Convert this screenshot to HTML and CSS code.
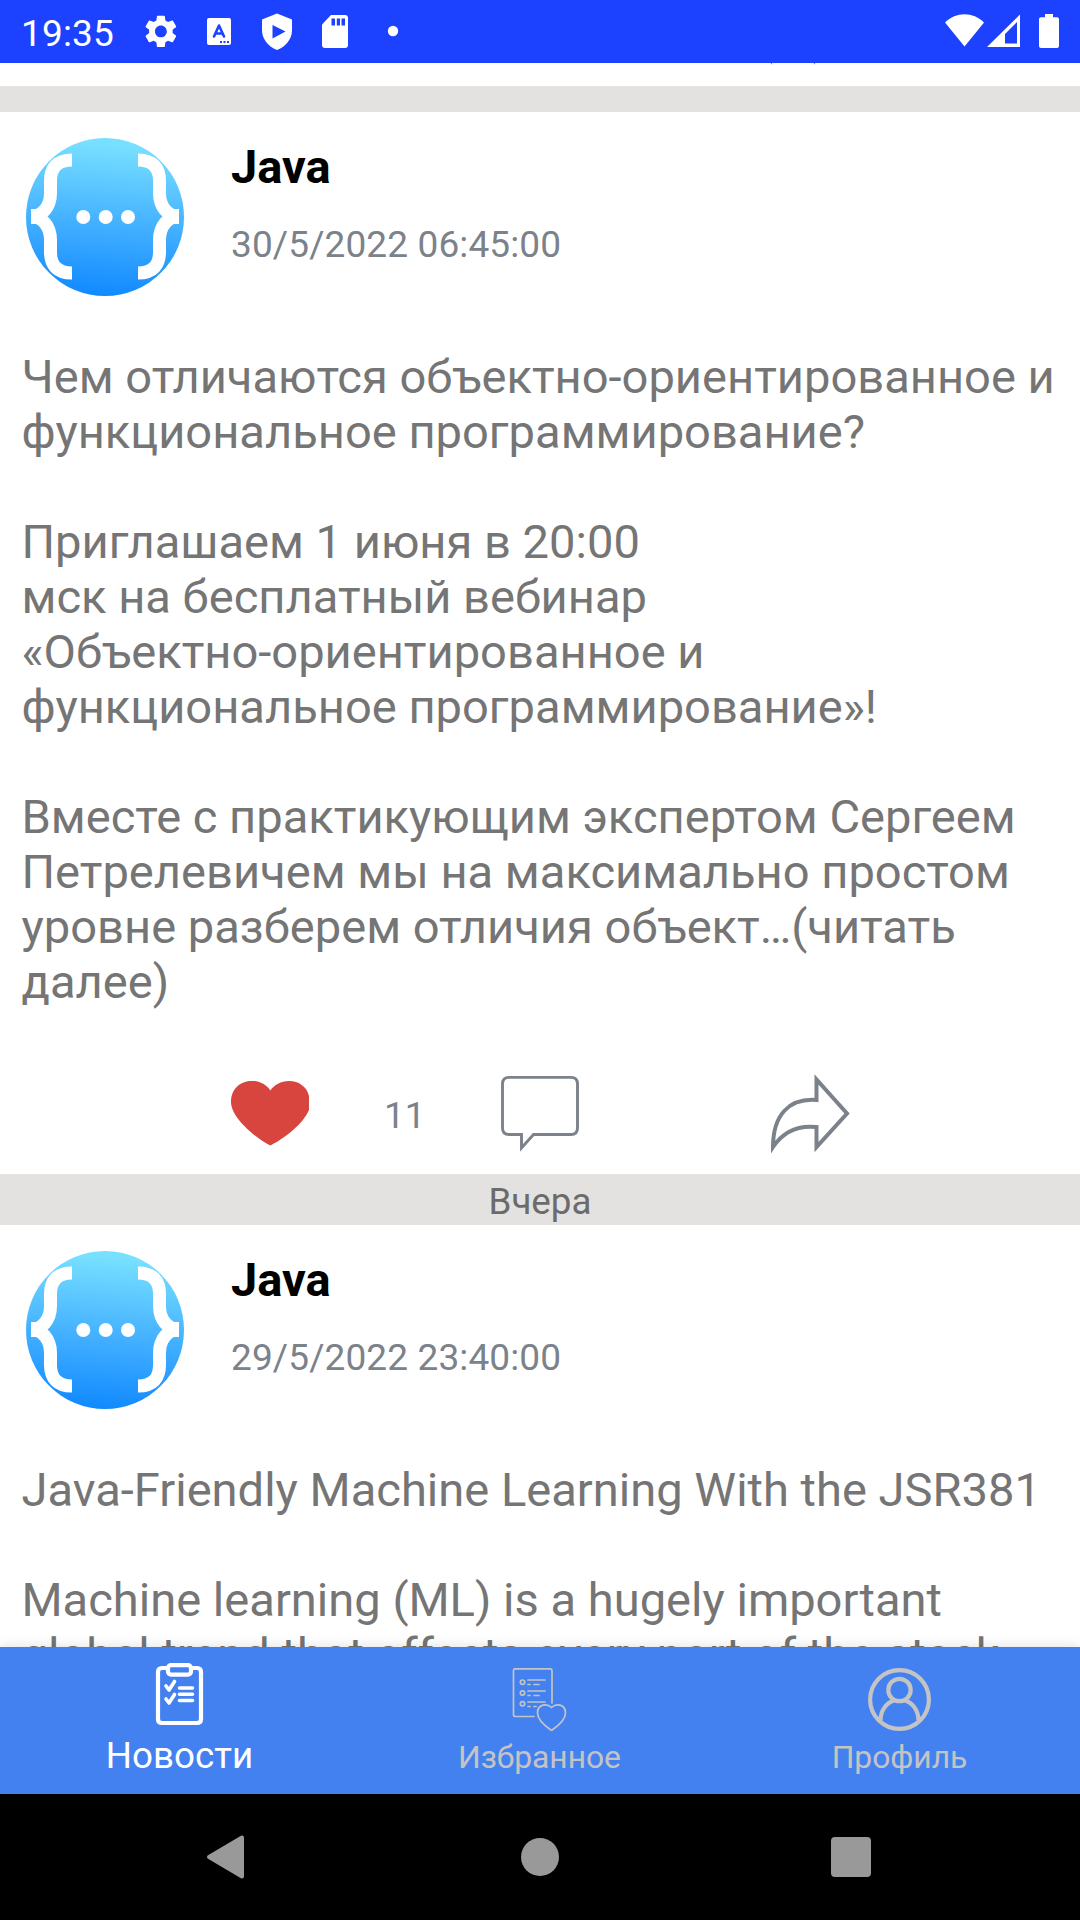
FILE: index.html
```html
<!DOCTYPE html>
<html lang="ru">
<head>
<meta charset="utf-8">
<title>Новости</title>
<link rel="stylesheet" href="styles.css">
</head>
<body>
<svg class="defs" width="0" height="0">
  <defs>
    <linearGradient id="sky" x1="0.08" y1="0" x2="0" y2="1">
      <stop offset="0" stop-color="#78e0ff"/>
      <stop offset="0.5" stop-color="#44b1ff"/>
      <stop offset="1" stop-color="#0d86ff"/>
    </linearGradient>
    <clipPath id="disc"><circle cx="79" cy="79" r="79"/></clipPath>
    <symbol id="avatar" viewBox="0 0 158 158">
      <g clip-path="url(#disc)">
        <rect width="158" height="158" fill="url(#sky)"/>
        <g fill="none" stroke="#fff" stroke-width="13">
          <path d="M46 22C31 22 24.500 30 24.500 43V55C24.500 69 16 78.500 5 78.500C16 78.500 24.500 88 24.500 102V114C24.500 127 31 135 46 135"/>
          <path d="M112 22C127 22 133.500 30 133.500 43V55C133.500 69 142 78.500 153 78.500C142 78.500 133.500 88 133.500 102V114C133.500 127 127 135 112 135"/>
        </g>
        <path d="M5 71H10L16 78.500L10 86H5ZM153 71H148L142 78.500L148 86H153Z" fill="#fff"/>
        <g fill="#fff"><circle cx="57.300" cy="79" r="7"/><circle cx="79.700" cy="79" r="7"/><circle cx="102" cy="79" r="7"/></g>
      </g>
    </symbol>
  </defs>
</svg>
<div class="screen">
  <header class="status">
    <span class="clock">19:35</span>
    <svg class="status-left" width="270" height="63" viewBox="130 0 270 63" fill="#fff">
      <path transform="translate(141.200 11.700) scale(1.640)" d="M19.140 12.940c.040-.3.060-.61.060-.94 0-.32-.02-.64-.07-.94l2.030-1.580c.18-.14.23-.41.120-.61l-1.920-3.320c-.12-.22-.37-.29-.59-.22l-2.390.96c-.5-.38-1.030-.7-1.620-.94l-.36-2.540c-.04-.24-.24-.41-.48-.41h-3.840c-.24 0-.43.17-.47.41l-.36 2.540c-.59.24-1.130.57-1.620.94l-2.390-.96c-.22-.08-.47 0-.59.22L2.740 8.870c-.12.21-.08.47.12.610l2.030 1.580c-.05.3-.09.63-.09.940s.02.640.07.940l-2.030 1.580c-.18.14-.23.41-.12.610l1.920 3.320c.12.22.37.29.59.22l2.390-.96c.5.38 1.030.7 1.620.94l.36 2.540c.05.24.24.41.48.410h3.840c.24 0 .44-.17.470-.41l.36-2.540c.59-.24 1.130-.56 1.620-.94l2.390.96c.22.080.47 0 .59-.22l1.920-3.320c.12-.22.070-.47-.12-.610l-2.010-1.580zM12 15.600c-1.980 0-3.600-1.620-3.600-3.600s1.620-3.600 3.600-3.600 3.600 1.620 3.600 3.600-1.620 3.600-3.600 3.600z"/>
      <rect x="207" y="18" width="24" height="27" rx="2"/>
      <path d="M214 36.500L219 25.500L224 36.500M215.500 33.500H222.500" fill="none" stroke="#1c42ff" stroke-width="2.600" stroke-linecap="round" stroke-linejoin="round"/>
      <path d="M220 41h2v2h-2zM223.500 41h2v2h-2zM227 41h2v2h-2z" fill="#1c42ff"/>
      <path d="M277 13.500L292 19.500V30C292 39 286 46.500 277 50C268 46.500 262 39 262 30V19.500Z"/>
      <path d="M272.500 25L285.500 31.500L272.500 38.500Z" fill="#1c42ff"/>
      <path d="M331 15H345Q348 15 348 18V45Q348 48 345 48H325Q322 48 322 45V24.500Z"/>
      <path d="M331.500 18.500h3.500v7h-3.500zM336.800 18.500h3.200v7h-3.200zM341.500 18.500h3.500v7h-3.500z" fill="#1c42ff"/>
      <circle cx="393" cy="31" r="5.200"/>
    </svg>
    <svg class="status-right" width="124" height="63" viewBox="940 0 124 63" fill="#fff">
      <path d="M945 22.500C956 11.500 973 11.500 984 22.500L964.500 46.500Z"/>
      <path d="M987 47L1020 14.500V47ZM1005 43.500H1017V22L1005 34Z" fill-rule="evenodd"/>
      <path d="M1045 14h8v3.300h4q2 0 2 2V46q0 2-2 2h-16q-2 0-2-2V19.300q0-2 2-2h4z"/>
    </svg>
  </header>

  <main class="feed">
    <div class="previous">
      <svg width="1080" height="23" viewBox="0 0 1080 23"><path d="M771.500 0V1.200M814.500 0V1.200" stroke="#8a8d9c" stroke-width="1.200"/></svg>
    </div>
    <div class="divider"></div>
    <article class="post">
      <div class="post-head">
        <svg class="avatar"><use href="#avatar"/></svg>
        <div class="meta">
          <h2 class="author">Java</h2>
          <time class="date">30/5/2022 06:45:00</time>
        </div>
      </div>
      <p class="text">Чем отличаются объектно-ориентированное и
функциональное программирование?

Приглашаем 1 июня в 20:00
мск на бесплатный вебинар
«Объектно-ориентированное и
функциональное программирование»!

Вместе с практикующим экспертом Сергеем
Петрелевичем мы на максимально простом
уровне разберем отличия объект…(читать
далее)</p>
      <div class="actions">
        <svg class="icon" width="79" height="79" viewBox="0 0 79 79"><path d="M39.300 71.500C25 64 0 44 0 28C0 15 9 7 21 7C29 7 36 11 39.300 16.500C43 11 50 7 58 7C68 7 76 13 78 22V36C72 50 54 64 39.300 71.500Z" fill="#d8453e"/></svg>
        <span class="likes">11</span>
        <svg class="icon comment" width="79" height="79" viewBox="0 0 79 79"><path d="M8 3.400H70Q76.500 3.400 76.500 10V54Q76.500 60.500 70 60.500H32.500L20.500 74V60.500H8Q1.500 60.500 1.500 54V10Q1.500 3.400 8 3.400Z" fill="none" stroke="#7c828a" stroke-width="2.900"/></svg>
        <svg class="icon share" width="79" height="79" viewBox="0 0 79 79"><path d="M45.500 5.500V26C18 24 2 41 2 73C12 58 27 51 45.500 53V73L76 39.500Z" fill="none" stroke="#7c828a" stroke-width="4"/></svg>
      </div>
    </article>
    <div class="day">Вчера</div>
    <article class="post">
      <div class="post-head">
        <svg class="avatar"><use href="#avatar"/></svg>
        <div class="meta">
          <h2 class="author">Java</h2>
          <time class="date">29/5/2022 23:40:00</time>
        </div>
      </div>
      <p class="text">Java-Friendly Machine Learning With the JSR381

Machine learning (ML) is a hugely important
global trend that affects every part of the stack</p>
    </article>
  </main>

  <nav class="tabs">
    <a class="tab active">
      <svg width="63" height="63" viewBox="0 0 63 63" fill="none" stroke="#fff" stroke-width="4.200" stroke-linecap="round" stroke-linejoin="round">
        <path d="M19 5H14Q10 5 10 9V56Q10 60 14 60H49Q53 60 53 56V9Q53 5 49 5H44"/>
        <rect x="20" y="2.100" width="23" height="9.500" rx="3"/>
        <path d="M18 23L21 27L26.500 18.500M18 36L21 40L26.500 31.500M31.500 25H44.500M31.500 31.200H44.500M31.500 37.500H44.500" stroke-width="3.600"/>
      </svg>
      <span>Новости</span>
    </a>
    <a class="tab">
      <svg width="63" height="63" viewBox="0 0 63 63" fill="none" stroke="#c4c4c4" stroke-width="1.700" stroke-linecap="round">
        <path d="M26 48.500H7.500Q5.500 48.500 5.500 46.500V2.800Q5.500 .8 7.500 .8H42Q44 .8 44 2.800V35"/>
        <circle cx="14.500" cy="14.200" r="2.200"/><circle cx="14.500" cy="25" r="2.200"/><circle cx="14.500" cy="35.800" r="2.200"/>
        <path d="M20 12H37M20 16.500H22M26 16.500H31M20 23H37M20 27.500H22M26 27.500H31M20 34H37M20 38.500H22M26 38.500H28"/>
        <path d="M43.500 62.500C37 58 29.500 52 29.500 45C29.500 36 39 35 43.500 39.500C48 35 57.500 36 57.500 45C57.500 52 50 58 43.500 62.500Z"/>
      </svg>
      <span>Избранное</span>
    </a>
    <a class="tab">
      <svg width="63" height="63" viewBox="0 0 63 63" fill="none" stroke="#c4c4c4" stroke-width="4.200">
        <circle cx="31.500" cy="31.500" r="29.400"/>
        <circle cx="31.500" cy="22" r="11.200"/>
        <path d="M12.500 52.500C12.500 43 18 35 26 32.500M50.500 52.500C50.500 43 45 35 37 32.500"/>
      </svg>
      <span>Профиль</span>
    </a>
  </nav>

  <footer class="system">
    <svg width="1080" height="126" viewBox="0 0 1080 126" fill="#999">
      <path d="M209 63L242 43.500V82.500Z" stroke="#999" stroke-width="4" stroke-linejoin="round"/>
      <circle cx="540" cy="63" r="19"/>
      <rect x="831" y="43" width="40" height="40" rx="4"/>
    </svg>
  </footer>
</div>
</body>
</html>
```
FILE: styles.css
```css
* { box-sizing: border-box; }
body { margin: 0; font-family: Roboto, sans-serif; background: #fff; }
.defs { display: block; height: 0; }
svg { display: block; flex: none; }
.screen { width: 1080px; height: 1920px; display: flex; flex-direction: column; overflow: hidden; }
.status { height: 63px; flex: none; display: flex; background: #1c42ff; color: #fff; }
.clock { width: 130px; padding-left: 21px; font-size: 37px; letter-spacing: .15px; line-height: 68px; }
.status-right { margin-left: auto; margin-right: 16px; }
.feed { flex: 1; min-height: 0; overflow: hidden; }
.previous { height: 23px; }
.divider { height: 26px; background: #e3e2e0; }
.post { padding: 26px 0 0 26px; }
.post-head { display: flex; gap: 47px; height: 158px; }
.avatar { width: 158px; height: 158px; }
.meta { display: flex; flex-direction: column; }
.author { margin: 0; padding-top: 1px; font-size: 47px; line-height: 56px; font-weight: 700; color: #000; }
.date { margin-top: 28px; font-size: 37px; letter-spacing: .12px; line-height: 43px; color: #7c828a; }
.text { margin: 53px 0 0 -4.500px; font-size: 47.080px; line-height: 55px; color: #757575; white-space: pre; }
.actions { display: flex; align-items: center; height: 79px; margin: 65px 0 21px 205px; }
.likes { width: 191px; padding: 3px 0 0 74px; font-size: 36.750px; line-height: 43px; color: #7c828a; }
.share { margin-left: 191px; }
.day { height: 51px; padding-top: 6px; background: #e3e2e0; color: #6b6b6b; font-size: 36.750px; line-height: 43px; text-align: center; }
.tabs { position: relative; height: 147px; flex: none; display: grid; grid-template-columns: repeat(3, 1fr); background: #4481f0; box-shadow: 0 0 12px rgba(0,0,0,.14); }
.tab { display: flex; flex-direction: column; align-items: center; padding: 21px 1px 0 0; color: #c4c4c4; font-size: 31.800px; line-height: 37px; }
.tab span { margin-top: 8px; }
.active { padding-top: 16px; color: #fff; font-size: 36.750px; }
.active span { margin-top: 11px; }
.system { height: 126px; flex: none; background: #000; }
```
